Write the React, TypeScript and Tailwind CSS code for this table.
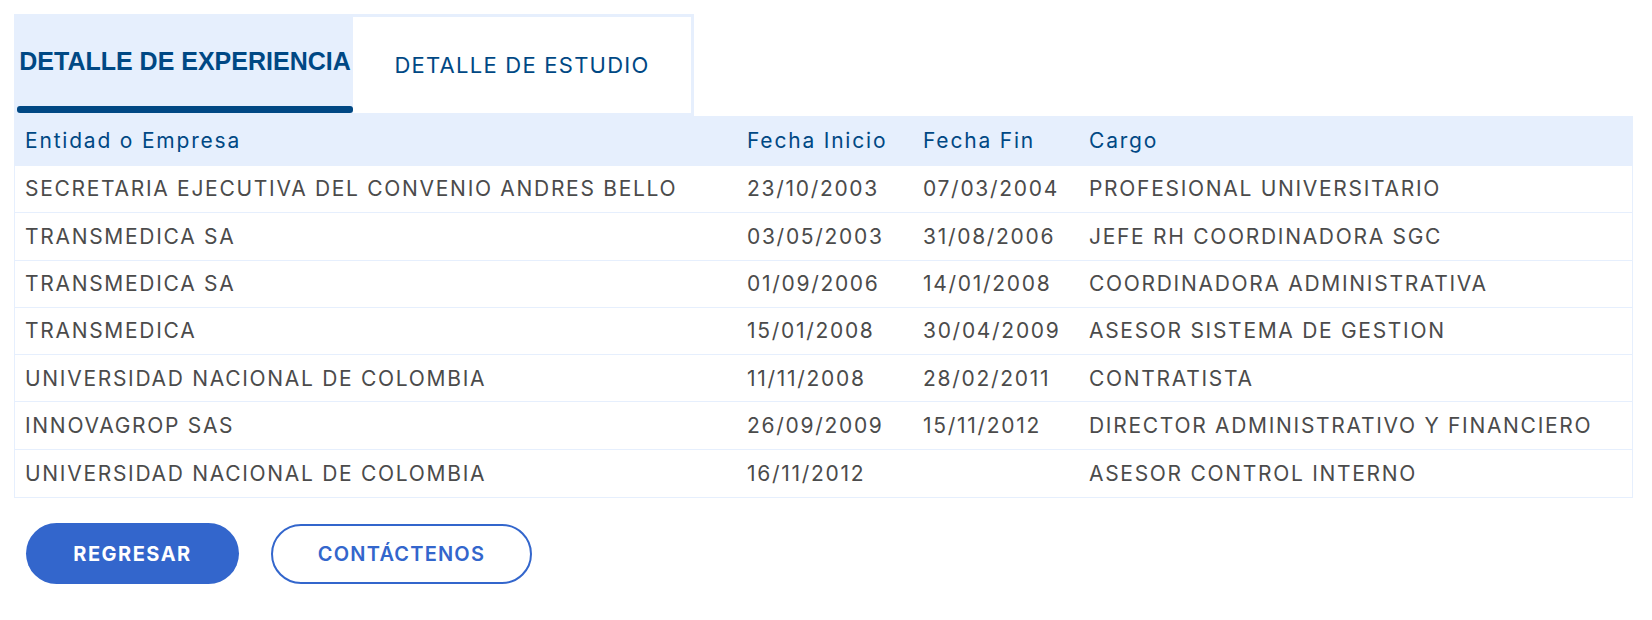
import React from 'react';

const rows = [
    { entidad: 'SECRETARIA EJECUTIVA DEL CONVENIO ANDRES BELLO', inicio: '23/10/2003', fin: '07/03/2004', cargo: 'PROFESIONAL UNIVERSITARIO' },
    { entidad: 'TRANSMEDICA SA', inicio: '03/05/2003', fin: '31/08/2006', cargo: 'JEFE RH COORDINADORA SGC' },
    { entidad: 'TRANSMEDICA SA', inicio: '01/09/2006', fin: '14/01/2008', cargo: 'COORDINADORA ADMINISTRATIVA' },
    { entidad: 'TRANSMEDICA', inicio: '15/01/2008', fin: '30/04/2009', cargo: 'ASESOR SISTEMA DE GESTION' },
    { entidad: 'UNIVERSIDAD NACIONAL DE COLOMBIA', inicio: '11/11/2008', fin: '28/02/2011', cargo: 'CONTRATISTA' },
    { entidad: 'INNOVAGROP SAS', inicio: '26/09/2009', fin: '15/11/2012', cargo: 'DIRECTOR ADMINISTRATIVO Y FINANCIERO' },
    { entidad: 'UNIVERSIDAD NACIONAL DE COLOMBIA', inicio: '16/11/2012', fin: '', cargo: 'ASESOR CONTROL INTERNO' },
];

const App: React.FC = () => {
    return (
        <div className="min-h-[620px] bg-white px-[14px] pt-[14px] font-['Inter',sans-serif]">
            {/* tabs */}
            <div className="flex w-[680px] bg-[#e6effd] p-[3px]">
                <div className="flex h-[96px] w-[336px] flex-col rounded-t-[5px] bg-[#e6effd]">
                    <div className="flex flex-1 items-center justify-center font-['Liberation_Sans',sans-serif] text-[25px] font-bold text-[#004884]">
                        DETALLE DE EXPERIENCIA
                    </div>
                    <div className="h-[7px] rounded-[3px] bg-[#004884]" />
                </div>
                <div className="flex h-[96px] flex-1 items-center justify-center bg-white text-[22px] tracking-[1.25px] text-[#004884]">
                    DETALLE DE ESTUDIO
                </div>
            </div>

            {/* table */}
            <div className="w-[1619px] border-x border-b border-[#e6effd]">
                <div className="grid h-[50px] grid-cols-[722px_176px_166px_1fr] items-center bg-[#e6effd] text-[21px] tracking-[1.8px] text-[#004884]">
                    <div className="px-[10px]">Entidad o Empresa</div>
                    <div className="px-[10px]">Fecha Inicio</div>
                    <div className="px-[10px]">Fecha Fin</div>
                    <div className="px-[10px]">Cargo</div>
                </div>
                {rows.map((r, i) => (
                    <div
                        key={i}
                        className={
                            'grid h-[47.3px] grid-cols-[722px_176px_166px_1fr] items-center text-[21px] tracking-[1.7px] text-[#4b4b4b] ' +
                            (i < rows.length - 1 ? 'border-b border-[#e6effd]' : '')
                        }
                    >
                        <div className="px-[10px]">{r.entidad}</div>
                        <div className="px-[10px]">{r.inicio}</div>
                        <div className="px-[10px]">{r.fin}</div>
                        <div className="px-[10px]">{r.cargo}</div>
                    </div>
                ))}
            </div>

            {/* actions */}
            <div className="mt-[25px] flex items-center gap-[32px] pl-[12px]">
                <button className="h-[61px] w-[213px] rounded-full bg-[#3366cc] text-[20px] font-bold tracking-[1.5px] text-white">
                    REGRESAR
                </button>
                <button className="h-[60px] w-[261px] rounded-full border-2 border-[#3366cc] bg-white text-[20px] font-semibold tracking-[1.2px] text-[#3366cc]">
                    CONTÁCTENOS
                </button>
            </div>
        </div>
    );
};

export default App;
